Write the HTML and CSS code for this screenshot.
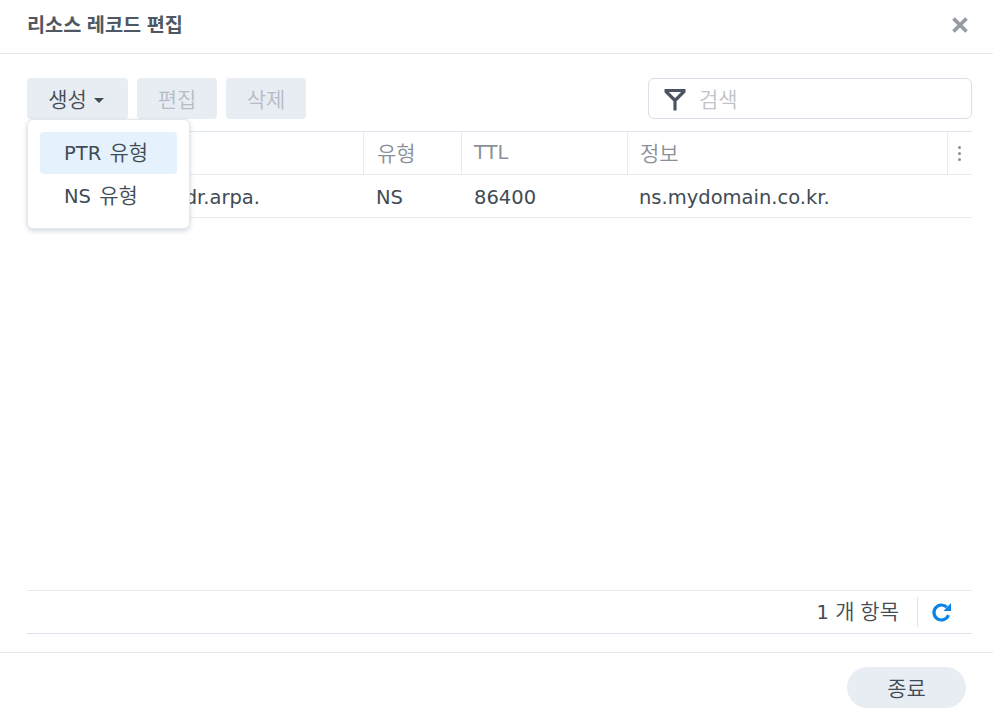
FILE: index.html
```html
<!DOCTYPE html>
<html lang="ko">
<head>
<meta charset="utf-8">
<title>리소스 레코드 편집</title>
<link rel="stylesheet" href="styles.css">
</head>
<body>
<div class="dialog">
  <header class="head">
    <h1 class="title">리소스 레코드 편집</h1>
    <svg class="close" width="18" height="18" viewBox="0 0 18 18"><path d="M2.5 2.5l13 13M15.500 2.500l-13 13" stroke="#969ba3" stroke-width="3.800" fill="none"/></svg>
  </header>
  <main class="body">
    <div class="toolbar">
      <div class="btn btn-create"><span class="ko">생성</span><span class="caret"></span></div>
      <div class="btn btn-off"><span class="ko">편집</span></div>
      <div class="btn btn-off"><span class="ko">삭제</span></div>
      <div class="search">
        <svg class="funnel" width="24" height="24" viewBox="0 0 24 24"><path d="M0.500 3.500h21M1.500 4l9.500 9.500 9.500-9.500M11 12.500v11" stroke="#4a5561" stroke-width="3.200" fill="none" stroke-linejoin="round"/></svg>
        <span class="placeholder ko">검색</span>
      </div>
    </div>
    <div class="grid">
      <div class="row row-head">
        <div class="cell c1"></div>
        <div class="cell c2"><span class="ko">유형</span></div>
        <div class="cell c3">TTL</div>
        <div class="cell c4"><span class="ko">정보</span></div>
        <div class="cell c5"><span class="dots"><i></i><i></i><i></i></span></div>
      </div>
      <div class="row row-data">
        <div class="cell c1">in-addr.arpa.</div>
        <div class="cell c2">NS</div>
        <div class="cell c3">86400</div>
        <div class="cell c4">ns.mydomain.co.kr.</div>
        <div class="cell c5"></div>
      </div>
      <div class="spacer"></div>
      <div class="pager">
        <span class="count">1 <span class="ko">개 항목</span></span>
        <span class="refresh">
          <svg width="22" height="22" viewBox="0 0 22 22"><path d="M17.500 14.100A7.500 7.500 0 1 1 15.800 6.200" stroke="#0a84e8" stroke-width="3.200" fill="none"/><path d="M12.500 10h7.500V2z" fill="#0a84e8"/></svg>
        </span>
      </div>
    </div>
    <div class="menu">
      <div class="menu-item active"><span>PTR <span class="ko menu-ko">유형</span></span></div>
      <div class="menu-item menu-item-ns"><span>NS <span class="ko menu-ko">유형</span></span></div>
    </div>
  </main>
  <footer class="foot">
    <div class="btn-close"><span class="ko">종료</span></div>
  </footer>
</div>
</body>
</html>
```
FILE: styles.css
```css
* { box-sizing: border-box; }
html, body { margin: 0; height: 100%; background: #fff; }
body {
  font-family: "DejaVu Sans", "Noto Sans CJK KR", sans-serif;
  font-size: 19.5px;
  color: #414b55;
  overflow: hidden;
}
.ko { font-family: "Noto Sans CJK KR", sans-serif; font-size: 21px; font-weight: 350; line-height: 1; }
.dialog { width: 993px; height: 714px; display: flex; flex-direction: column; }
.head {
  height: 54px;
  padding: 0 24px 0 27px;
  border-bottom: 1px solid #e3e8ef;
  display: flex;
  align-items: center;
  justify-content: space-between;
  flex: none;
}
.title { margin: 0 0 5px; font-family: "Noto Sans CJK KR", sans-serif; font-size: 19.7px; font-weight: 600; color: #4f5862; line-height: 50px; }
.close { margin-top: -3px; }
.body {
  position: relative;
  flex: 1;
  padding: 24px 21px 0 27px;
  display: flex;
  flex-direction: column;
  height: 598px;
}
.toolbar { display: flex; gap: 9px; height: 41px; margin-bottom: 12px; flex: none; }
.btn {
  height: 41px;
  width: 80px;
  border-radius: 4px;
  background: #e8ecf3;
  display: flex;
  align-items: center;
  justify-content: center;
}
.btn-create { width: 101px; }
.btn-off { color: #b6bcc5; }
.caret {
  margin-left: 7px;
  margin-right: 3px;
  margin-top: 3px;
  border-left: 5px solid transparent;
  border-right: 5px solid transparent;
  border-top: 5px solid #414b55;
}
.search {
  margin-left: auto;
  width: 324px;
  height: 41px;
  border: 1px solid #d8e0ea;
  border-radius: 6px;
  display: flex;
  align-items: center;
  padding-left: 15px;
}
.funnel { flex: none; }
.placeholder { margin-left: 11px; color: #bfc3ca; }
.grid { flex: 1; display: flex; flex-direction: column; }
.row { display: flex; height: 43px; flex: none; align-items: stretch; }
.row-head { height: 44px; border-top: 1px solid #dde3ec; border-bottom: 1px solid #e8ecf2; color: #8a9099; }
.row-data { border-bottom: 1px solid #e8ecf2; }
.cell { padding: 0 12px; display: flex; align-items: center; white-space: nowrap; overflow: hidden; }
.row-head .cell { padding-bottom: 1px; }
.row-data .cell { padding-top: 3px; }
.c1 { width: 336px; }
.row-data .c1 { justify-content: flex-end; padding-right: 103px; }
.c2 { width: 98px; padding-left: 13px; }
.c3 { width: 166px; padding-left: 13px; }
.c4 { width: 320px; }
.row-head .c4 { padding-left: 13px; }
.row-head .c2 { padding-left: 14px; }
.c5 { width: 25px; padding: 0; justify-content: center; }
.row-head .c2, .row-head .c3, .row-head .c4, .row-head .c5 { box-shadow: inset 1px 0 0 #e8ecf2; }
.row-head .c5 { padding: 0; }
.dots { display: flex; flex-direction: column; gap: 3px; }
.dots i { display: block; width: 3px; height: 3px; border-radius: 50%; background: #8a9099; }
.spacer { flex: 1; }
.pager {
  height: 44px;
  flex: none;
  border-top: 1px solid #e8ecf2;
  border-bottom: 1px solid #dde3ec;
  display: flex;
  align-items: center;
  justify-content: flex-end;
  margin-bottom: 18px;
}
.count { margin-right: 18px; color: #414b55; }
.refresh {
  width: 55px;
  height: 30px;
  border-left: 1px solid #dde3ec;
  display: flex;
  align-items: center;
  padding-left: 13px;
}
.menu {
  position: absolute;
  left: 27px;
  top: 65px;
  width: 163px;
  height: 110px;
  padding: 12px;
  background: #fff;
  border: 1px solid #e3e8ef;
  border-radius: 6px;
  box-shadow: 0 2px 5px rgba(90, 110, 140, .28);
}
.menu-item { height: 42px; border-radius: 4px; padding-left: 24px; display: flex; align-items: center; }
.menu-item.active { background: #e5f1fd; }
.menu-item-ns { padding-top: 2px; }
.menu-ko { margin-left: 2px; }
.foot {
  height: 62px;
  flex: none;
  border-top: 1px solid #e3e8ef;
  padding: 14px 27px 0 0;
  display: flex;
  justify-content: flex-end;
}
.btn-close {
  width: 119px;
  height: 41px;
  border-radius: 21px;
  background: #e8ecf3;
  display: flex;
  align-items: center;
  justify-content: center;
}
```
